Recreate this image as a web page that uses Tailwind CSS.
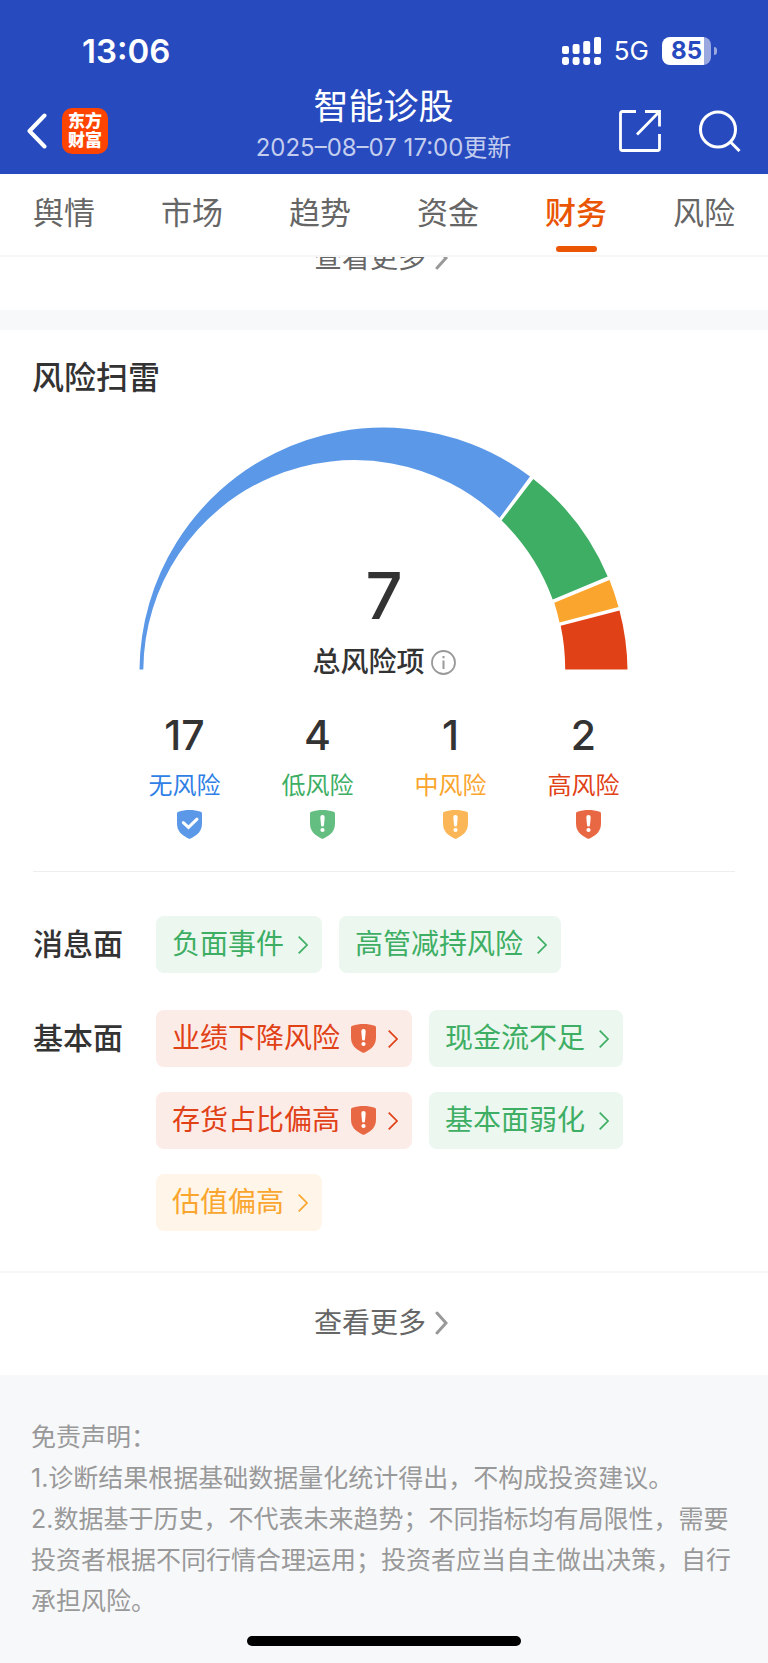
<!DOCTYPE html>
<html lang="zh-CN">
<head>
<meta charset="utf-8">
<meta name="viewport" content="width=device-width, initial-scale=1">
<title>智能诊股</title>
<script src="https://cdn.jsdelivr.net/npm/@tailwindcss/browser@4"></script>
</head>
<body class="bg-[#f7f8fa] font-['Inter','Noto_Sans_CJK_SC',sans-serif] text-[#333333]">
<svg class="hidden" aria-hidden="true">
  <symbol id="shield" viewBox="0 0 25 29">
    <path fill="currentColor" d="M0 3.4C0 2.5.5 2 1.4 1.7C8.2-.5 16.8-.5 23.6 1.7C24.5 2 25 2.5 25 3.4V13.6C25 20.6 21.2 25 13.6 28.6Q12.5 29.1 11.4 28.6C3.8 25 0 20.6 0 13.6Z"/>
  </symbol>
  <symbol id="shield-alert" viewBox="0 0 25 29">
    <use href="#shield" width="25" height="29"/>
    <path fill="#fff" d="M10.3 7.2a2.2 2.2 0 0 1 4.4 0L14 15a1.5 1.5 0 0 1-3 0Z"/>
    <circle cx="12.5" cy="20" r="2.1" fill="#fff"/>
  </symbol>
  <symbol id="shield-check" viewBox="0 0 25 29">
    <use href="#shield" width="25" height="29"/>
    <path fill="none" stroke="#fff" stroke-width="3" stroke-linecap="round" d="M6.3 12.6L11.5 17.4L20 9.2"/>
  </symbol>
  <symbol id="chevron" viewBox="0 0 10 18">
    <path fill="none" stroke="currentColor" stroke-width="1.7" d="M.7 .7L9 9L.7 17.3"/>
  </symbol>
  <symbol id="chevron-bold" viewBox="0 0 13 24">
    <path fill="none" stroke="currentColor" stroke-width="3" stroke-linecap="round" d="M2 2L11 12L2 22"/>
  </symbol>
</svg>

<header class="bg-[#274abf] text-white">
  <div class="flex h-[84px] items-center justify-between pt-[18px] pr-[51px] pl-[82px]">
    <time class="text-[33px] leading-10 font-semibold">13:06</time>
    <div class="flex items-center gap-[13px]">
      <svg class="h-7 w-[39px]" viewBox="0 0 39 28" fill="#fff" aria-label="信号">
        <rect x="0" y="9" width="7" height="8" rx="2"/><rect x="10.6" y="7" width="7" height="10" rx="2"/><rect x="21.2" y="4" width="7" height="13" rx="2"/><rect x="32" y="0" width="7" height="17" rx="2"/>
        <rect x="0" y="20" width="7" height="8" rx="2.4"/><rect x="10.6" y="20" width="7" height="8" rx="2.4"/><rect x="21.2" y="20" width="7" height="8" rx="2.4"/><rect x="32" y="20" width="7" height="8" rx="2.4"/>
      </svg>
      <span class="text-[26px] leading-8">5G</span>
      <div class="flex items-center gap-[3px]">
        <div class="flex h-7 w-[49px] items-center justify-center rounded-[8px] bg-linear-to-r from-white from-86% to-[#99a9e0] to-86% text-[24px] leading-7 font-bold text-[#274abf]">85</div>
        <span class="h-2 w-[3px] rounded-r-full bg-[#99a9e0]"></span>
      </div>
    </div>
  </div>
  <div class="grid h-[90px] grid-cols-[1fr_auto_1fr] items-center pr-[27px] pl-[26px]">
    <div class="flex items-center gap-[15px] pt-1">
      <button type="button" aria-label="返回">
        <svg class="h-9 w-[21px]" viewBox="0 0 21 36" fill="none" stroke="#fff" stroke-width="4" stroke-linecap="round" stroke-linejoin="round"><path d="M18.5 2.5L3.5 18L18.5 33.5"/></svg>
      </button>
      <div class="flex size-[46px] flex-col items-center justify-center rounded-[10px] bg-[#ff4400] text-[17px] leading-[19px] font-black"><span>东方</span><span>财富</span></div>
    </div>
    <div class="flex flex-col items-center self-start">
      <h1 class="text-[35px] leading-[44px]">智能诊股</h1>
      <p class="text-[24px] leading-10 text-[#c3cdee]">2025–08–07 17:00更新</p>
    </div>
    <div class="flex items-center justify-end gap-[38px] pt-1">
      <button type="button" aria-label="分享">
        <svg class="size-[42px]" viewBox="0 0 42 42" fill="none" stroke="#fff" stroke-width="2.8"><path d="M17 1.5H3.5Q1.5 1.5 1.5 3.5V38.5Q1.5 40.5 3.5 40.5H38.5Q40.5 40.5 40.5 38.5V24"/><path d="M26 1.5H40.5V16.5M40 2L18 24.5"/></svg>
      </button>
      <button type="button" aria-label="搜索">
        <svg class="size-[42px]" viewBox="0 0 42 42" fill="none" stroke="#fff" stroke-width="3"><circle cx="19" cy="19.5" r="17.5"/><path d="M31 31.5L40.5 41"/></svg>
      </button>
    </div>
  </div>
</header>

<nav class="relative z-10 grid grid-cols-6 border-b-2 border-[#f7f7f8] bg-white pt-[17px] text-[31px] leading-[44px] text-[#666666]">
  <button type="button" class="flex flex-col items-center gap-[11px]">舆情</button>
  <button type="button" class="flex flex-col items-center gap-[11px]">市场</button>
  <button type="button" class="flex flex-col items-center gap-[11px]">趋势</button>
  <button type="button" class="flex flex-col items-center gap-[11px]">资金</button>
  <button type="button" aria-current="page" class="flex flex-col items-center gap-[11px] pb-[3px] font-medium text-[#ea5504]">财务<span class="h-[6px] w-[41px] rounded-full bg-[#ea5504]"></span></button>
  <button type="button" class="flex flex-col items-center gap-[11px]">风险</button>
</nav>

<main>
  <!-- previous card, scrolled under the tab bar -->
  <section class="-mt-[52px] flex h-[105px] items-center justify-center bg-white pr-[6px]">
    <a href="#" class="flex items-center gap-[9px] text-[28px] leading-10 text-[#666666]">查看更多<svg class="h-6 w-[13px] text-[#999999]"><use href="#chevron-bold"/></svg></a>
  </section>

  <section class="mt-5 bg-white">
    <h2 class="px-8 pt-6 text-[32px] leading-[48px] font-medium">风险扫雷</h2>
    <div class="mx-auto mt-[25px] grid w-[490px] justify-items-center">
      <svg class="col-start-1 row-start-1 h-[243px] w-[490px]" viewBox="139 427 490 243" aria-hidden="true">
        <path fill="#5b98e8" d="M139.5 669.5A244 244 0 0 1 530 476.5L499.5 518A211 211 0 0 0 143.3 669.5Z"/>
        <path fill="#3dae63" d="M533.3 479A244 244 0 0 1 607.7 576.5L552.7 599.5A211 211 0 0 0 501.6 520.5Z"/>
        <path fill="#faa52d" d="M609.5 580A244 244 0 0 1 618.5 607L559.5 622.5A211 211 0 0 0 554.3 602.7Z"/>
        <path fill="#e14116" d="M619.5 610.5A244 244 0 0 1 627.5 669.5H565.2A211 211 0 0 0 560.7 625.8Z"/>
      </svg>
      <div class="col-start-1 row-start-1 flex flex-col items-center pt-[133px]">
        <strong class="text-[65px] leading-[72px] font-medium">7</strong>
        <div class="mt-3 flex items-center gap-[6px] text-[28px] leading-9 font-medium">总风险项
          <button type="button" aria-label="说明">
            <svg class="size-[25px]" viewBox="0 0 25 25" fill="none" stroke="#999" stroke-width="1.8"><circle cx="12.5" cy="12.5" r="11.5"/><path stroke-width="2" d="M12.5 10.5V19M12.5 6V8.3"/></svg>
          </button>
        </div>
      </div>
    </div>

    <ul class="mx-auto mt-[30px] grid w-[532px] grid-cols-4 text-center">
      <li class="flex flex-col items-center"><b class="text-[41px] leading-[50px] font-medium">17</b><span class="mt-2 text-[24px] leading-9 text-[#2f7fe6]">无风险</span><svg class="mt-[6px] ml-[10px] h-[29px] w-[25px] text-[#5b98e8]"><use href="#shield-check"/></svg></li>
      <li class="flex flex-col items-center"><b class="text-[41px] leading-[50px] font-medium">4</b><span class="mt-2 text-[24px] leading-9 text-[#3dae63]">低风险</span><svg class="mt-[6px] ml-[10px] h-[29px] w-[25px] text-[#64be82]"><use href="#shield-alert"/></svg></li>
      <li class="flex flex-col items-center"><b class="text-[41px] leading-[50px] font-medium">1</b><span class="mt-2 text-[24px] leading-9 text-[#faa52d]">中风险</span><svg class="mt-[6px] ml-[10px] h-[29px] w-[25px] text-[#fbb757]"><use href="#shield-alert"/></svg></li>
      <li class="flex flex-col items-center"><b class="text-[41px] leading-[50px] font-medium">2</b><span class="mt-2 text-[24px] leading-9 text-[#e14116]">高风险</span><svg class="mt-[6px] ml-[10px] h-[29px] w-[25px] text-[#e96844]"><use href="#shield-alert"/></svg></li>
    </ul>

    <div class="mx-[33px] mt-8 flex flex-col gap-[37px] border-t border-[#eeeeee] pt-11 pb-10">
      <div class="flex">
        <h3 class="w-[123px] shrink-0 text-[30px] leading-[57px] font-medium">消息面</h3>
        <div class="flex flex-wrap gap-x-[17px] gap-y-[25px] text-[28px] leading-[57px]">
          <a href="#" class="flex items-center gap-[14px] rounded-[8px] bg-[#ebf7ef] pr-[14px] pl-4 text-[#3dae63]">负面事件<svg class="h-[18px] w-[10px]"><use href="#chevron"/></svg></a>
          <a href="#" class="flex items-center gap-[14px] rounded-[8px] bg-[#ebf7ef] pr-[14px] pl-4 text-[#3dae63]">高管减持风险<svg class="h-[18px] w-[10px]"><use href="#chevron"/></svg></a>
        </div>
      </div>
      <div class="flex">
        <h3 class="w-[123px] shrink-0 text-[30px] leading-[57px] font-medium">基本面</h3>
        <div class="flex flex-wrap gap-x-[17px] gap-y-[25px] text-[28px] leading-[57px]">
          <a href="#" class="flex items-center gap-3 rounded-[8px] bg-[#fcece8] pr-[14px] pl-4 text-[#e14116]"><span class="flex items-center gap-[11px]">业绩下降风险<svg class="h-[29px] w-[25px] text-[#e96844]"><use href="#shield-alert"/></svg></span><svg class="h-[18px] w-[10px]"><use href="#chevron"/></svg></a>
          <a href="#" class="flex items-center gap-[14px] rounded-[8px] bg-[#ebf7ef] pr-[14px] pl-4 text-[#3dae63]">现金流不足<svg class="h-[18px] w-[10px]"><use href="#chevron"/></svg></a>
          <a href="#" class="flex items-center gap-3 rounded-[8px] bg-[#fcece8] pr-[14px] pl-4 text-[#e14116]"><span class="flex items-center gap-[11px]">存货占比偏高<svg class="h-[29px] w-[25px] text-[#e96844]"><use href="#shield-alert"/></svg></span><svg class="h-[18px] w-[10px]"><use href="#chevron"/></svg></a>
          <a href="#" class="flex items-center gap-[14px] rounded-[8px] bg-[#ebf7ef] pr-[14px] pl-4 text-[#3dae63]">基本面弱化<svg class="h-[18px] w-[10px]"><use href="#chevron"/></svg></a>
          <a href="#" class="flex items-center gap-[14px] rounded-[8px] bg-[#fff5e8] pr-[14px] pl-4 text-[#faa52d]">估值偏高<svg class="h-[18px] w-[10px]"><use href="#chevron"/></svg></a>
        </div>
      </div>
    </div>

    <div class="flex h-[104px] items-center justify-center border-t-2 border-[#f7f7f8] pr-[6px] pb-[2px]">
      <a href="#" class="flex items-center gap-[9px] text-[28px] leading-10 text-[#666666]">查看更多<svg class="h-6 w-[13px] text-[#999999]"><use href="#chevron-bold"/></svg></a>
    </div>
  </section>
</main>

<footer class="px-[31px] pt-[42px] pb-[17px]">
  <div class="text-[25px] leading-[41px] text-[#999999]">
    <p>免责声明：</p>
    <p>1.诊断结果根据基础数据量化统计得出，不构成投资建议。</p>
    <p>2.数据基于历史，不代表未来趋势；不同指标均有局限性，需要投资者根据不同行情合理运用；投资者应当自主做出决策，自行承担风险。</p>
  </div>
  <div class="mx-auto mt-[14px] h-[10px] w-[274px] rounded-full bg-black"></div>
</footer>
</body>
</html>
